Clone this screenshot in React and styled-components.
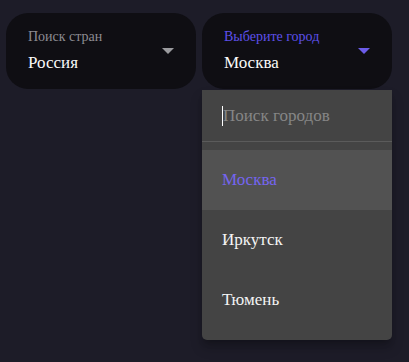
import React, { useState } from "react";
import styled, { createGlobalStyle } from "styled-components";

const GlobalStyle = createGlobalStyle`
	body {
		margin: 0;
		padding: 0;
		background-color: #1d1c28;
	}
`;

const Page = styled.div`
	min-height: 362px;
	padding: 13px 6px;
	box-sizing: border-box;
	display: flex;
	align-items: flex-start;
	gap: 6px;
	font-family: "Liberation Serif", "Times New Roman", serif;
`;

const Field = styled.div`
	width: 190px;
	display: flex;
	flex-direction: column;
`;

const Select = styled.div`
	height: 76px;
	box-sizing: border-box;
	padding: 16px 22px 16px 22px;
	background-color: #0f0e13;
	border-radius: 22px;
	display: flex;
	align-items: center;
	justify-content: space-between;
	cursor: pointer;
`;

const Texts = styled.div`
	display: flex;
	flex-direction: column;
	gap: 8px;
`;

const Label = styled.span`
	font-size: 14px;
	line-height: 16px;
	color: ${(p) => (p.$active ? "#5e50ea" : "#8d8c92")};
`;

const Value = styled.span`
	font-size: 17px;
	line-height: 20px;
	color: #fafafa;
`;

const Arrow = styled.span`
	width: 0;
	height: 0;
	border-left: 6.5px solid transparent;
	border-right: 6.5px solid transparent;
	border-top: 6px solid ${(p) => (p.$active ? "#6c5ce9" : "#9b9b9f")};
`;

const Menu = styled.div`
	margin-top: 1px;
	background-color: #444444;
	border-radius: 0 0 5px 5px;
	box-shadow: 0 5px 6px -3px rgba(0, 0, 0, 0.25), 0 8px 12px 1px rgba(0, 0, 0, 0.16);
	padding-bottom: 10px;
`;

const SearchRow = styled.label`
	height: 51px;
	padding: 0 20px;
	display: flex;
	align-items: center;
	border-bottom: 1px solid #5b5b5b;
`;

const Caret = styled.span`
	width: 1px;
	height: 20px;
	background-color: #ffffff;
`;

const SearchInput = styled.input`
	flex: 1;
	min-width: 0;
	border: 0;
	outline: none;
	padding: 0;
	background: transparent;
	font-family: "Liberation Serif", "Times New Roman", serif;
	font-size: 17px;
	color: #e8e8e8;
	caret-color: transparent;
	&::placeholder {
		color: #868686;
	}
`;

const List = styled.ul`
	list-style: none;
	margin: 0;
	padding: 8px 0 0;
`;

const Item = styled.li`
	height: 60px;
	padding: 0 20px;
	display: flex;
	align-items: center;
	font-size: 17px;
	color: ${(p) => (p.$selected ? "#7565f0" : "#f4f4f4")};
	background-color: ${(p) => (p.$selected ? "#525252" : "transparent")};
	cursor: pointer;
`;

const cities = ["Москва", "Иркутск", "Тюмень"];

const App = () => {
	const [city, setCity] = useState("Москва");
	const [query, setQuery] = useState("");

	return (
		<>
			<GlobalStyle />
			<Page>
				<Field>
					<Select>
						<Texts>
							<Label>Поиск стран</Label>
							<Value>Россия</Value>
						</Texts>
						<Arrow />
					</Select>
				</Field>
				<Field>
					<Select>
						<Texts>
							<Label $active>Выберите город</Label>
							<Value>{city}</Value>
						</Texts>
						<Arrow $active />
					</Select>
					<Menu>
						<SearchRow>
							<Caret />
							<SearchInput
								placeholder="Поиск городов"
								value={query}
								onChange={(e) => setQuery(e.target.value)}
							/>
						</SearchRow>
						<List>
							{cities
								.filter((c) => c.toLowerCase().includes(query.toLowerCase()))
								.map((c) => (
									<Item key={c} $selected={c === city} onClick={() => setCity(c)}>
										{c}
									</Item>
								))}
						</List>
					</Menu>
				</Field>
			</Page>
		</>
	);
};

export default App;
